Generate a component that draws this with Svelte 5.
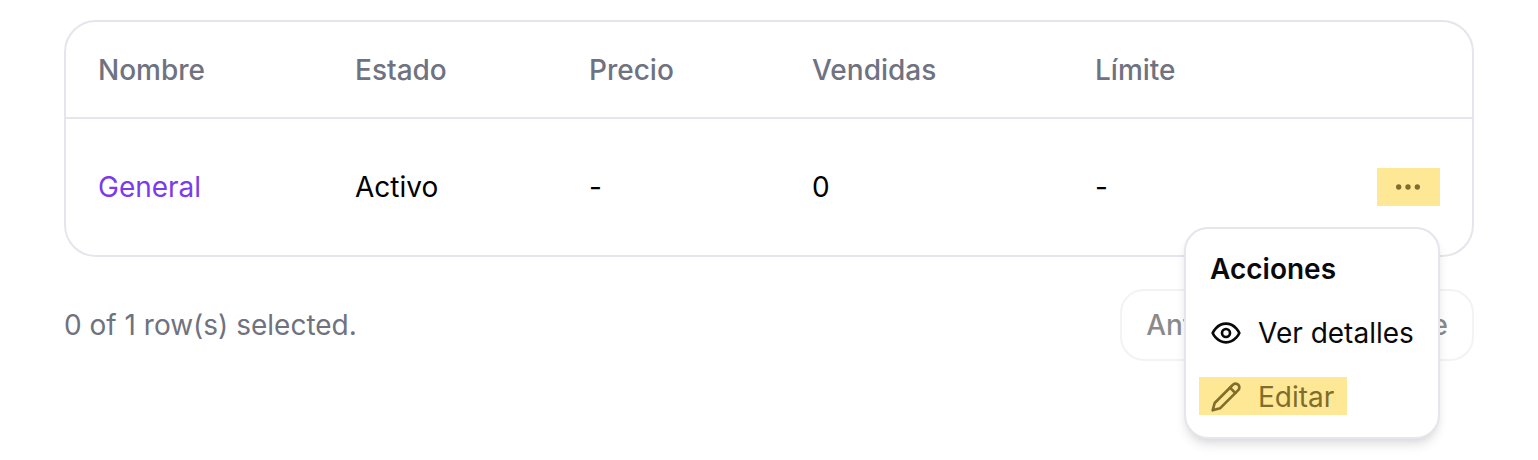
<script>
  const columns = ["Nombre", "Estado", "Precio", "Vendidas", "Límite"];
</script>

<div class="page">
  <div class="card">
    <div class="row head">
      {#each columns as col}
        <div class="cell">{col}</div>
      {/each}
      <div class="cell"></div>
    </div>
    <div class="row body">
      <div class="cell name">General</div>
      <div class="cell">Activo</div>
      <div class="cell">-</div>
      <div class="cell">0</div>
      <div class="cell">-</div>
      <div class="cell actions">
        <button class="more" aria-label="Acciones">
          <svg width="32" height="32" viewBox="0 0 24 24" fill="currentColor">
            <circle cx="5" cy="12" r="2" />
            <circle cx="12" cy="12" r="2" />
            <circle cx="19" cy="12" r="2" />
          </svg>
        </button>
      </div>
    </div>
  </div>

  <div class="footer">
    <span class="selected">0 of 1 row(s) selected.</span>
    <div class="pager">
      <button>Anterior</button>
      <button>Siguiente</button>
    </div>
  </div>

  <div class="menu">
    <div class="menu-title">Acciones</div>
    <div class="menu-item">
      <svg width="32" height="32" viewBox="0 0 24 24" fill="none" stroke="currentColor" stroke-width="2" stroke-linecap="round" stroke-linejoin="round">
        <path d="M2 12s3-7 10-7 10 7 10 7-3 7-10 7-10-7-10-7Z" />
        <circle cx="12" cy="12" r="3" />
      </svg>
      <span>Ver detalles</span>
    </div>
    <div class="menu-item edit">
      <svg width="32" height="32" viewBox="0 0 24 24" fill="none" stroke="currentColor" stroke-width="2" stroke-linecap="round" stroke-linejoin="round">
        <path d="M17 3a2.85 2.83 0 1 1 4 4L7.5 20.5 2 22l1.5-5.5Z" />
        <path d="m15 5 4 4" />
      </svg>
      <span>Editar</span>
    </div>
  </div>
</div>

<style>
  :global(body) {
    margin: 0;
    background: #fff;
    font-family: Inter, "Liberation Sans", sans-serif;
  }

  .page {
    position: relative;
    width: 1538px;
    height: 460px;
    padding: 20px 64px 0 64px;
    box-sizing: border-box;
    overflow: hidden;
    font-size: 28px;
    color: #09090b;
  }

  .card {
    width: 1410px;
    box-sizing: border-box;
    border: 2px solid #e5e5ec;
    border-radius: 32px;
  }

  .row {
    display: grid;
    grid-template-columns: 257px 234px 223px 283px 1fr 96px;
    padding-left: 32px;
    align-items: center;
  }

  .head {
    height: 95px;
    border-bottom: 2px solid #e5e5ec;
    color: #6f7280;
    font-weight: 500;
  }

  .body {
    height: 136px;
    color: #000;
  }

  .name {
    color: #7c3aed;
  }

  .actions {
    display: flex;
    justify-content: flex-end;
    padding-right: 32px;
  }

  .more {
    width: 63px;
    height: 38px;
    padding: 0 1px 0 0;
    border: 0;
    background: #fee896;
    color: #806d2b;
    display: flex;
    align-items: center;
    justify-content: center;
  }

  .footer {
    display: flex;
    align-items: center;
    justify-content: space-between;
    width: 1410px;
    margin-top: 32px;
  }

  .selected {
    color: #6f7280;
  }

  .pager {
    display: flex;
    gap: 16px;
  }

  .pager button {
    height: 72px;
    padding: 0 24px;
    font: inherit;
    font-weight: 500;
    color: #18181b;
    background: #fff;
    border: 2px solid #e9e9ee;
    border-radius: 24px;
    opacity: 0.5;
  }

  .menu {
    position: absolute;
    left: 1184px;
    top: 227px;
    width: 256px;
    height: 212px;
    box-sizing: border-box;
    padding: 8px 13px;
    background: #fff;
    border: 2px solid #e5e5ec;
    border-radius: 24px;
    box-shadow: 0 8px 12px -2px rgba(0, 0, 0, 0.1), 0 4px 8px -4px rgba(0, 0, 0, 0.1);
  }

  .menu-title {
    height: 64px;
    padding-left: 11px;
    display: flex;
    align-items: center;
    font-weight: 600;
  }

  .menu-item {
    height: 38px;
    display: flex;
    align-items: center;
    gap: 16px;
    padding: 0 13px 0 11px;
    margin-top: 13px;
    width: fit-content;
    white-space: nowrap;
  }

  .edit {
    margin-top: 25px;
    padding-top: 1px;
    box-sizing: border-box;
    background: #fee896;
    color: #806d2b;
  }
</style>
